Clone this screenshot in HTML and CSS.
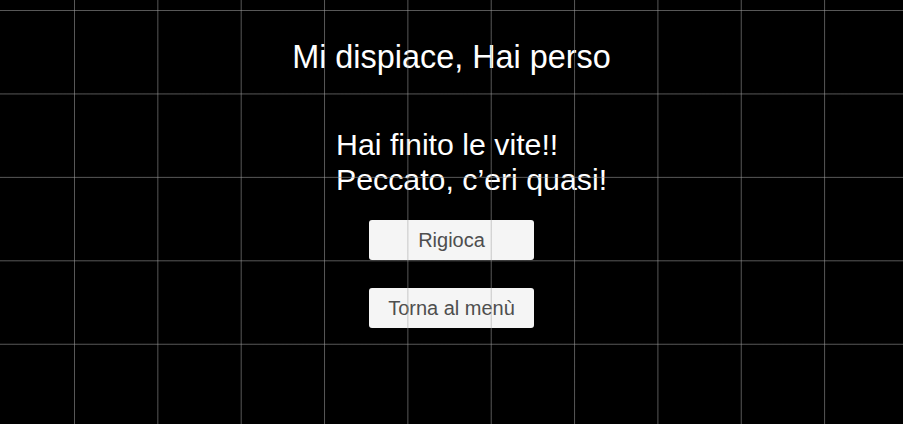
FILE: index.html
```html
<!DOCTYPE html>
<html lang="it">
<head>
<meta charset="utf-8">
<title>Hai perso</title>
<link rel="stylesheet" href="styles.css">
</head>
<body>
<div class="screen">
  <h1 class="title">Mi dispiace, Hai perso</h1>
  <p class="message">Hai finito le vite!!<br>Peccato, c’eri quasi!</p>
  <div class="actions">
    <button class="btn" type="button">Rigioca</button>
    <button class="btn" type="button">Torna al menù</button>
  </div>
  <div class="grid-overlay"></div>
</div>
</body>
</html>
```

FILE: styles.css
```css
html, body {
  margin: 0;
  padding: 0;
  background: #000;
}

.screen {
  position: relative;
  width: 903px;
  height: 424px;
  overflow: hidden;
  background: #000;
  display: flex;
  flex-direction: column;
  align-items: center;
  padding-top: 39px;
  box-sizing: border-box;
  font-family: "Liberation Sans", Arial, sans-serif;
  color: #fff;
}

.title {
  margin: 0;
  font-size: 32.4px;
  line-height: 37px;
  font-weight: normal;
}

.message {
  align-self: flex-start;
  margin: 52px 0 0 336px;
  font-size: 30.3px;
  line-height: 34.5px;
}

.actions {
  margin-top: 23px;
  display: flex;
  flex-direction: column;
  gap: 28px;
}

.btn {
  width: 165px;
  height: 40px;
  border: none;
  border-radius: 3px;
  background: #f5f5f5;
  color: #4e4e4e;
  font-family: "Liberation Sans", Arial, sans-serif;
  font-size: 20px;
  padding: 0;
}

.grid-overlay {
  position: absolute;
  inset: 0;
  pointer-events: none;
  background-image:
    linear-gradient(to right, rgba(160,160,160,0.55) 1px, transparent 1px),
    linear-gradient(to bottom, rgba(160,160,160,0.55) 1px, transparent 1px);
  background-size: 83.35px 83.45px;
  background-position: 74px 10px;
}
```
